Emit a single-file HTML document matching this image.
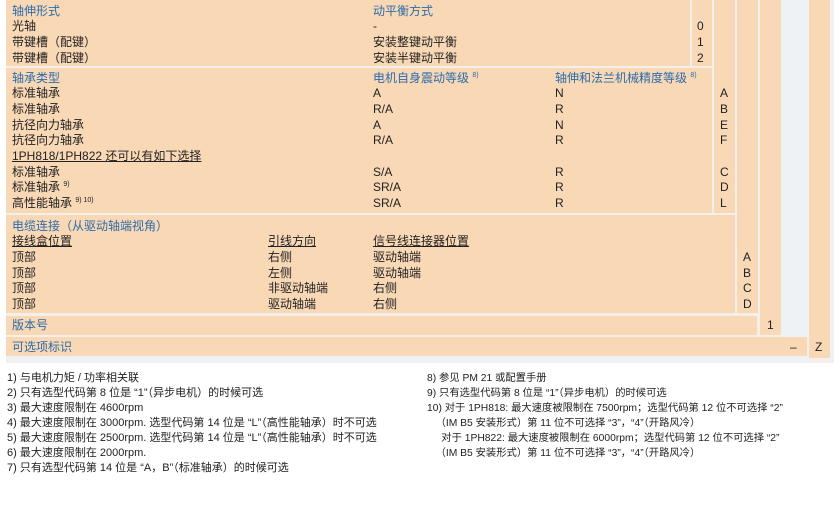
<!DOCTYPE html>
<html><head><meta charset="utf-8"><style>
*{margin:0;padding:0;box-sizing:border-box}
body{width:840px;height:525px;background:#fff;position:relative;overflow:hidden;font-family:"Liberation Sans","Noto Sans CJK SC",sans-serif;color:#222;font-size:12px}
.b{position:absolute;background:#f9d8b6}
.g{position:absolute;background:#eef2f4}
.t{position:absolute;white-space:nowrap;line-height:15.7px}
.h{color:#2b6cab}
.u{text-decoration:underline}
sup{font-size:7px;line-height:0;position:relative;top:-5px;vertical-align:baseline}
.f{position:absolute;white-space:nowrap;font-size:10.3px;line-height:15px;color:#222}
</style></head><body>
<div class="g" style="left:6px;top:0;width:828px;height:363px;background:#f5efe9"></div>
<div class="g" style="left:781px;top:0;width:28px;height:337px"></div>
<div class="g" style="left:6px;top:356px;width:803px;height:7px"></div>
<div class="g" style="left:830px;top:0;width:4px;height:363px"></div>
<div class="b" style="left:6px;top:0;width:684px;height:66px"></div>
<div class="b" style="left:692px;top:0;width:20px;height:66px"></div>
<div class="b" style="left:6px;top:68px;width:706px;height:145px"></div>
<div class="b" style="left:714px;top:0;width:21px;height:213px"></div>
<div class="b" style="left:6px;top:215px;width:729px;height:98px"></div>
<div class="b" style="left:737px;top:0;width:21px;height:313px"></div>
<div class="b" style="left:6px;top:316px;width:751px;height:19px"></div>
<div class="b" style="left:760px;top:0;width:21px;height:335px"></div>
<div class="b" style="left:6px;top:337px;width:801px;height:19px"></div>
<div class="b" style="left:809px;top:0;width:21px;height:358px"></div>

<div class="t" style="left:12px;top:3.5px"><span class="h">轴伸形式</span><br>光轴<br>带键槽（配键）<br>带键槽（配键）</div>
<div class="t" style="left:373px;top:3.5px"><span class="h">动平衡方式</span><br>-<br>安装整键动平衡<br>安装半键动平衡</div>
<div class="t" style="left:697px;top:19.2px">0<br>1<br>2</div>

<div class="t" style="left:12px;top:70.5px"><span class="h">轴承类型</span><br>标准轴承<br>标准轴承<br>抗径向力轴承<br>抗径向力轴承<br><span class="u">1PH818/1PH822 还可以有如下选择</span><br>标准轴承<br>标准轴承 <sup>9)</sup><br>高性能轴承 <sup>9) 10)</sup></div>
<div class="t" style="left:373px;top:70.5px"><span class="h">电机自身震动等级 <sup>8)</sup></span><br>A<br>R/A<br>A<br>R/A<br>&nbsp;<br>S/A<br>SR/A<br>SR/A</div>
<div class="t" style="left:555px;top:70.5px"><span class="h">轴伸和法兰机械精度等级 <sup>8)</sup></span><br>N<br>R<br>N<br>R<br>&nbsp;<br>R<br>R<br>R</div>
<div class="t" style="left:720px;top:86.2px">A<br>B<br>E<br>F<br>&nbsp;<br>C<br>D<br>L</div>

<div class="t" style="left:12px;top:218.5px"><span class="h">电缆连接（从驱动轴端视角）</span><br><span class="u">接线盒位置</span><br>顶部<br>顶部<br>顶部<br>顶部</div>
<div class="t" style="left:268px;top:234.2px"><span class="u">引线方向</span><br>右侧<br>左侧<br>非驱动轴端<br>驱动轴端</div>
<div class="t" style="left:373px;top:234.2px"><span class="u">信号线连接器位置</span><br>驱动轴端<br>驱动轴端<br>右侧<br>右侧</div>
<div class="t" style="left:743px;top:249.9px">A<br>B<br>C<br>D</div>

<div class="t h" style="left:12px;top:318px">版本号</div>
<div class="t" style="left:767px;top:318px">1</div>
<div class="t h" style="left:12px;top:340px">可选项标识</div>
<div class="t" style="left:790px;top:340px">–</div>
<div class="t" style="left:815px;top:340px">Z</div>

<div class="f" style="left:7px;top:371px;font-size:11px">1) 与电机力矩 / 功率相关联<br>2) 只有选型代码第 8 位是 “1”（异步电机）的时候可选<br>3) 最大速度限制在 4600rpm<br>4) 最大速度限制在 3000rpm. 选型代码第 14 位是 “L”（高性能轴承）时不可选<br>5) 最大速度限制在 2500rpm. 选型代码第 14 位是 “L”（高性能轴承）时不可选<br>6) 最大速度限制在 2000rpm.<br>7) 只有选型代码第 14 位是 “A，B”（标准轴承）的时候可选</div>
<div class="f" style="left:427px;top:371px">8) 参见 PM 21 或配置手册<br>9) 只有选型代码第 8 位是 “1”（异步电机）的时候可选<br>10) 对于 1PH818: 最大速度被限制在 7500rpm；选型代码第 12 位不可选择 “2”<br>&nbsp;&nbsp;&nbsp;（IM B5 安装形式）第 11 位不可选择 “3”，“4”（开路风冷）<br>&nbsp;&nbsp;&nbsp;&nbsp;&nbsp;对于 1PH822: 最大速度被限制在 6000rpm；选型代码第 12 位不可选择 “2”<br>&nbsp;&nbsp;&nbsp;（IM B5 安装形式）第 11 位不可选择 “3”，“4”（开路风冷）</div>
</body></html>
